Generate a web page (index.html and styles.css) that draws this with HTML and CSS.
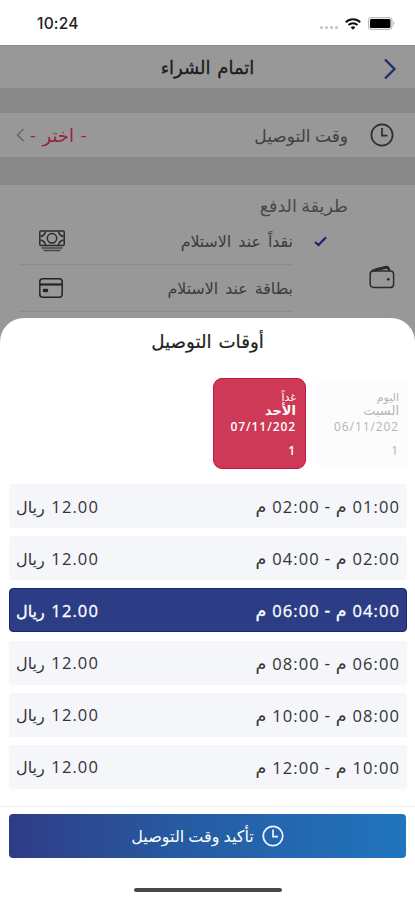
FILE: index.html
```html
<!DOCTYPE html>
<html lang="ar" dir="rtl">
<head>
    <meta charset="UTF-8">
    <meta name="viewport" content="width=device-width, initial-scale=1.0">
    <title>اتمام الشراء</title>
    <link rel="stylesheet" href="styles.css">
</head>
<body>
    <div class="screen">
        <div class="status-bar" dir="ltr">
            <span class="time">10:24</span>
            <div class="status-icons">
                <div class="dots"><i></i><i></i><i></i><i></i></div>
                <svg class="wifi" width="16" height="12" viewBox="0 0 16 12" fill="none" stroke="#111" stroke-width="2">
                    <path d="M.8 4.2a10.3 10.3 0 0 1 14.4 0M3.5 7a6.5 6.5 0 0 1 9 0"/>
                    <path d="M8 11.8 5.7 9.4a3.3 3.3 0 0 1 4.6 0z" fill="#111" stroke="none"/>
                </svg>
                <svg width="27" height="13" viewBox="0 0 27 13">
                    <rect x=".6" y=".6" width="23.3" height="11.8" rx="3.2" fill="#fff" stroke="#bbb" stroke-width="1.2"/>
                    <rect x="2" y="2" width="20.5" height="9" rx="1.6" fill="#000"/>
                    <path d="M25 4.3c1.8.7 1.8 3.7 0 4.4z" fill="#bbb"/>
                </svg>
            </div>
        </div>

        <div class="page">
            <div class="header">
                <svg class="back" width="14" height="22" viewBox="0 0 14 22" fill="none" stroke="#1c2d72" stroke-width="2.3">
                    <path d="M2 1.5 11.5 11 2 20.5"/>
                </svg>
                <h1>اتمام الشراء</h1>
            </div>

            <div class="time-row">
                <svg class="clock" width="24" height="24" viewBox="0 0 24 24" fill="none" stroke="#2b2b2b" stroke-width="1.7">
                    <circle cx="12" cy="12" r="10.6"/>
                    <path d="M12 5v7.6h5.5"/>
                </svg>
                <span class="time-label">وقت التوصيل</span>
                <span class="choose">- اختر -</span>
                <svg width="9" height="14" viewBox="0 0 9 14" fill="none" stroke="#666" stroke-width="1.5">
                    <path d="M7.5 1 1.5 7l6 6"/>
                </svg>
            </div>

            <div class="payment">
                <svg class="wallet" width="26" height="24" viewBox="0 0 26 24" fill="none" stroke="#2b2b2b" stroke-width="1.5">
                    <rect x="1.2" y="6" width="23.4" height="16.5" rx="3.2"/>
                    <path d="M2 7c1-2 2.5-2.3 5-3l9-2.3c2-.5 3.5 0 4 1.5l.8 2.5M5 6l13-3.2 2.5 3"/>
                    <circle cx="19.3" cy="14.3" r="1.4" fill="#2b2b2b" stroke="none"/>
                </svg>
                <div class="methods">
                    <h2>طريقة الدفع</h2>
                    <div class="method">
                        <svg class="check" width="13" height="11" viewBox="0 0 13 11" fill="none" stroke="#14246f" stroke-width="2.2">
                            <path d="m1 6 3.5 3L12 1.3"/>
                        </svg>
                        <span>نقداً عند الاستلام</span>
                        <svg width="26" height="22" viewBox="0 0 26 22" fill="none" stroke="#2b2b2b" stroke-width="1.5">
                            <rect x=".8" y="1" width="24.4" height="14.5" rx="1"/>
                            <circle cx="13" cy="8.3" r="4.7"/>
                            <path d="M1.5 6.5c2.5-.5 4.5-2.5 5-5M24.5 6.5c-2.5-.5-4.5-2.5-5-5M1.5 10c2.5.5 4.5 2.5 5 5M24.5 10c-2.5.5-4.5 2.5-5 5"/>
                            <path d="M2.5 18h21M4.5 20.5h17" stroke="#484848"/>
                        </svg>
                    </div>
                    <div class="method">
                        <span>بطاقة عند الاستلام</span>
                        <svg width="24" height="20" viewBox="0 0 24 20" fill="none" stroke="#242424" stroke-width="1.5">
                            <rect x=".8" y=".8" width="22.4" height="18.4" rx="3"/>
                            <path d="M1 6.5h22" stroke-width="2.2"/>
                            <rect x="4.5" y="11.5" width="4" height="2" rx=".7" fill="#242424"/>
                        </svg>
                    </div>
                </div>
            </div>
        </div>

        <div class="sheet">
            <h2 class="sheet-title">أوقات التوصيل</h2>
            <div class="days">
                <div class="day">
                    <span class="when">اليوم</span>
                    <span class="weekday">السبت</span>
                    <span class="date">06/11/2021</span>
                </div>
                <div class="day active">
                    <span class="when">غداً</span>
                    <span class="weekday">الأحد</span>
                    <span class="date">07/11/2021</span>
                </div>
            </div>
            <div class="slots">
                <div class="slot">
                    <span><b>01:00</b> م - <b>02:00</b> م</span>
                    <span class="price"><b>12.00</b> ريال</span>
                </div>
                <div class="slot">
                    <span><b>02:00</b> م - <b>04:00</b> م</span>
                    <span class="price"><b>12.00</b> ريال</span>
                </div>
                <div class="slot selected">
                    <span><b>04:00</b> م - <b>06:00</b> م</span>
                    <span class="price"><b>12.00</b> ريال</span>
                </div>
                <div class="slot">
                    <span><b>06:00</b> م - <b>08:00</b> م</span>
                    <span class="price"><b>12.00</b> ريال</span>
                </div>
                <div class="slot">
                    <span><b>08:00</b> م - <b>10:00</b> م</span>
                    <span class="price"><b>12.00</b> ريال</span>
                </div>
                <div class="slot">
                    <span><b>10:00</b> م - <b>12:00</b> م</span>
                    <span class="price"><b>12.00</b> ريال</span>
                </div>
            </div>
            <div class="footer">
                <button class="confirm">
                    <svg width="22" height="22" viewBox="0 0 24 24" fill="none" stroke="#e9f2ff" stroke-width="1.9">
                        <circle cx="12" cy="12" r="10.6"/>
                        <path d="M12 5v7.6h5.5"/>
                    </svg>
                    <span>تأكيد وقت التوصيل</span>
                </button>
                <div class="home-bar"></div>
            </div>
        </div>
    </div>
</body>
</html>
```
FILE: styles.css
```css
* {
    box-sizing: border-box;
}
body {
    margin: 0;
    background: #fff;
    font-family: "Open Sans", "DejaVu Sans", sans-serif;
    color: #333;
}
h1, h2 {
    margin: 0;
    font-weight: normal;
}
svg {
    display: block;
    flex: none;
}
.screen {
    position: relative;
    width: 415px;
    height: 900px;
    overflow: hidden;
}

/* status bar */
.status-bar {
    height: 45px;
    padding: 2px 20px 0 37px;
    display: flex;
    align-items: center;
    justify-content: space-between;
}
.time {
    font-family: Inter, sans-serif;
    font-size: 15.5px;
    font-weight: 500;
    letter-spacing: 0.2px;
    color: #222;
}
.status-icons {
    display: flex;
    align-items: center;
    gap: 7px;
}
.dots {
    display: flex;
    gap: 2px;
    padding-top: 8px;
}
.dots i {
    width: 3px;
    height: 3px;
    border-radius: 50%;
    background: #c4c4c4;
}

/* dimmed checkout page */
.page {
    height: 855px;
    background: #898989;
}
.header {
    height: 43px;
    padding: 0 18px;
    display: flex;
    align-items: center;
    background: #989898;
    border-top: 1px solid #8c8c8c;
}
.header .back {
    margin-top: 4px;
}
.header h1 {
    flex: 1;
    padding-left: 14px;
    text-align: center;
    font-size: 18px;
    word-spacing: 2px;
    color: #1c1c1c;
    -webkit-text-stroke: 0.3px #1c1c1c;
}
.time-row {
    height: 44px;
    margin-top: 25px;
    padding: 0 21px 0 16px;
    display: flex;
    align-items: center;
    background: #989898;
}
.time-label {
    flex: 1;
    margin-right: 22px;
    font-size: 17px;
    color: #414141;
}
.choose {
    margin-left: 5px;
    font-size: 18px;
    word-spacing: 2px;
    color: #96243d;
}
.payment {
    height: 200px;
    margin-top: 28px;
    padding: 0 20px;
    display: flex;
    background: #989898;
}
.wallet {
    margin-top: 80px;
}
.methods {
    flex: 1;
    margin-right: 21px;
}
.methods h2 {
    height: 33px;
    line-height: 40px;
    font-size: 17.5px;
    color: #484848;
}
.method {
    height: 47px;
    margin-right: 55px;
    padding: 0 0 0 19px;
    display: flex;
    align-items: center;
    justify-content: space-between;
    border-bottom: 1px solid #8c8c8c;
    font-size: 15.8px;
    word-spacing: 3px;
    color: #3b3b3b;
}
.check {
    margin-right: -34px;
    margin-left: 21px;
}
.check + span {
    flex: 1;
}

/* delivery times sheet */
.sheet {
    position: absolute;
    left: 0;
    right: 0;
    bottom: 0;
    height: 582px;
    border-radius: 24px 24px 0 0;
    background: #fff;
}
.sheet-title {
    height: 60px;
    line-height: 45px;
    text-align: center;
    font-size: 18.3px;
    word-spacing: 2px;
    color: #222;
    -webkit-text-stroke: 0.2px #222;
}
.days {
    display: flex;
    gap: 10px;
    padding: 0 6px;
}
.day {
    width: 93px;
    height: 91px;
    padding: 12px 9px 0;
    display: flex;
    flex-direction: column;
    border: 1px solid #fcfcfc;
    border-radius: 9px;
    background: #fcfcfc;
    color: #b4b4b4;
}
.day.active {
    background: #ce3957;
    border: 1px solid #c11442;
    color: #fff;
}
.when {
    height: 13px;
    line-height: 13px;
    font-family: "DejaVu Sans", sans-serif;
    font-size: 11px;
}
.weekday {
    height: 14px;
    line-height: 14px;
    font-family: "DejaVu Sans", sans-serif;
    font-size: 13px;
}
.date {
    width: 68px;
    margin-top: -3px;
    line-height: 24px;
    font-size: 12px;
    font-weight: 500;
    letter-spacing: 0.9px;
    word-break: break-all;
}
.active .date, .active .weekday {
    font-weight: 600;
}
.slots {
    display: grid;
    gap: 8.2px;
    padding: 15px 8px 0 9px;
}
.slot {
    height: 44px;
    padding: 0 8px 0 7px;
    display: flex;
    align-items: center;
    justify-content: space-between;
    border-radius: 4px;
    background: #f4f6fa;
    font-size: 17.5px;
    word-spacing: 1.2px;
}
.slot b {
    display: inline-block;
    font-size: 16.5px;
    font-weight: normal;
    letter-spacing: 1.1px;
    margin-right: -1px;
}
.price {
    font-size: 16px;
    word-spacing: 2.5px;
}
.slot.selected {
    background: #2c3d86;
    border: 1px solid #182776;
    padding: 0 7px 0 6px;
    color: #fff;
    -webkit-text-stroke: 0.3px #fff;
}
.footer {
    margin-top: 17px;
    padding: 7px 9px 0;
    border-top: 1px solid #f0f0f0;
}
.confirm {
    width: 100%;
    height: 44px;
    padding: 0;
    display: flex;
    align-items: center;
    justify-content: center;
    gap: 8px;
    border: 0;
    border-radius: 4px;
    background: linear-gradient(to right, #303b87, #2759a0 40%, #2075bd);
    color: #fff;
    font-family: inherit;
    font-size: 16px;
}
.home-bar {
    width: 148px;
    height: 4px;
    margin: 30px auto 0;
    border-radius: 2px;
    background: #4a4a4a;
}
```
